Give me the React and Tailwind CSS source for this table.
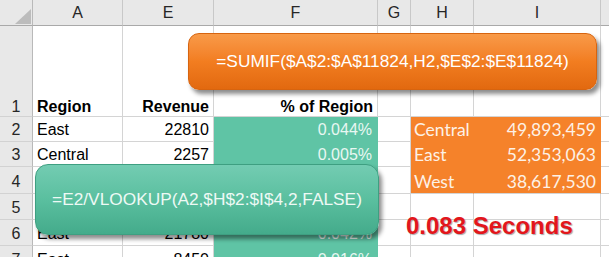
import React from "react";

const ARIAL = { fontFamily: '"Liberation Sans", Arial, sans-serif' };

function HeadCell({ children, last }) {
  return (
    <div
      className={
        last
          ? "bg-[#e8e8e8] border-b border-[#a9a9a9] flex items-center justify-center text-[16px] text-[#262626]"
          : "bg-[#e8e8e8] border-r border-b border-r-[#c8c8c8] border-b-[#a9a9a9] flex items-center justify-center text-[16px] text-[#262626]"
      }
    >
      {children}
    </div>
  );
}

function RowHead({ children }) {
  return (
    <div className="bg-[#e8e8e8] border-r border-b border-r-[#b9b9b9] border-b-[#d2d2d2] flex items-end justify-center pb-[2px] text-[16px] leading-[18px] text-[#262626]">
      {children}
    </div>
  );
}

function RowHeadTall({ children }) {
  return (
    <div className="bg-[#e8e8e8] border-r border-b border-r-[#b9b9b9] border-b-[#d2d2d2] flex items-end justify-center pb-0 text-[16px] leading-[18px] text-[#262626]">
      {children}
    </div>
  );
}

function Cell({ children, kind = "plain", align = "left", bold = false }) {
  let cls;
  if (kind === "teal") {
    cls =
      "bg-[#5fc4a5] border-r border-b border-[#5fc4a5] flex items-end pb-[2px] text-[16px] leading-[18px] text-[#e9f7f2] justify-end pr-[5px]";
  } else if (kind === "orange") {
    cls =
      align === "right"
        ? "bg-[#f5822a] border-r border-b border-[#f5822a] flex items-end pb-[1px] text-[17.5px] leading-[20px] text-[#fdf1e6] justify-end pr-[4px]"
        : "bg-[#f5822a] border-r border-b border-[#f5822a] flex items-end pb-[1px] text-[17.5px] leading-[20px] text-[#fdf1e6] justify-start pl-[3px]";
  } else if (kind === "orangeLast") {
    cls =
      align === "right"
        ? "bg-[#f5822a] border-r border-b border-r-[#f5822a] border-b-[#d4d4d4] flex items-end pb-[1px] text-[17.5px] leading-[20px] text-[#fdf1e6] justify-end pr-[4px]"
        : "bg-[#f5822a] border-r border-b border-r-[#f5822a] border-b-[#d4d4d4] flex items-end pb-[1px] text-[17.5px] leading-[20px] text-[#fdf1e6] justify-start pl-[3px]";
  } else if (kind === "tall") {
    cls =
      align === "right"
        ? "bg-white border-r border-b border-[#d4d4d4] flex items-end justify-end pr-[4px] pb-0 text-[16px] leading-[18px] text-black font-bold"
        : "bg-white border-r border-b border-[#d4d4d4] flex items-end justify-start pl-[4px] pb-0 text-[16px] leading-[18px] text-black font-bold";
  } else if (kind === "tallF") {
    cls =
      "bg-white border-r border-b border-[#d4d4d4] flex items-end justify-end pr-[4px] pb-0 text-[16px] leading-[18px] text-black font-bold";
  } else if (kind === "edge") {
    cls = "bg-white border-b border-[#d4d4d4]";
  } else {
    cls =
      align === "right"
        ? "bg-white border-r border-b border-[#d4d4d4] flex items-end justify-end pr-[4px] pb-[2px] text-[16px] leading-[18px] text-black"
        : "bg-white border-r border-b border-[#d4d4d4] flex items-end justify-start pl-[4px] pb-[2px] text-[16px] leading-[18px] text-black";
  }
  const style = kind.startsWith("orange")
    ? { fontFamily: 'Lato, "Open Sans", sans-serif' }
    : undefined;
  return (
    <div className={cls} style={style}>
      {children}
    </div>
  );
}

const dataRows = [
  { n: 2, a: "East", e: "22810", f: "0.044%", h: "Central", i: "49,893,459", hk: "orange" },
  { n: 3, a: "Central", e: "2257", f: "0.005%", h: "East", i: "52,353,063", hk: "orange" },
  { n: 4, a: "West", e: "5871", f: "0.015%", h: "West", i: "38,617,530", hk: "orangeLast" },
  { n: 5, a: "Central", e: "4512", f: "0.009%", h: "", i: "", hk: "plain" },
  { n: 6, a: "East", e: "21780", f: "0.042%", h: "", i: "", hk: "plain" },
  { n: 7, a: "East", e: "8450", f: "0.016%", h: "", i: "", hk: "plain" },
];

export default function App() {
  return (
    <div className="relative w-[609px] h-[257px] overflow-hidden bg-white" style={ARIAL}>
      <div className="grid grid-cols-[33px_90px_91px_164px_33px_63px_127px_8px] grid-rows-[26px_91px_25px_25px_27px_26px_26px_26px]">
        <div className="bg-[#e8e8e8] border-r border-b border-r-[#b9b9b9] border-b-[#a9a9a9] relative">
          <svg className="absolute left-[15px] top-[9px]" width="16" height="15" viewBox="0 0 16 15">
            <polygon points="16,0 16,15 0,15" fill="#bcbcbc" />
          </svg>
        </div>
        <HeadCell>A</HeadCell>
        <HeadCell>E</HeadCell>
        <HeadCell>F</HeadCell>
        <HeadCell>G</HeadCell>
        <HeadCell>H</HeadCell>
        <HeadCell>I</HeadCell>
        <HeadCell last></HeadCell>

        <RowHeadTall>1</RowHeadTall>
        <Cell kind="tall">Region</Cell>
        <Cell kind="tall" align="right">Revenue</Cell>
        <Cell kind="tallF">% of Region</Cell>
        <Cell kind="tall"></Cell>
        <Cell kind="tall"></Cell>
        <Cell kind="tall"></Cell>
        <Cell kind="edge"></Cell>

        {dataRows.map((r) => (
          <React.Fragment key={r.n}>
            <RowHead>{r.n}</RowHead>
            <Cell>{r.a}</Cell>
            <Cell align="right">{r.e}</Cell>
            <Cell kind="teal">{r.f}</Cell>
            <Cell></Cell>
            <Cell kind={r.hk}>{r.h}</Cell>
            <Cell kind={r.hk} align="right">{r.i}</Cell>
            <Cell kind="edge"></Cell>
          </React.Fragment>
        ))}
      </div>

      {/* Orange SUMIF callout */}
      <div className="absolute left-[188px] top-[33px] w-[409px] h-[57px] rounded-[11px] border border-[#d7640f] bg-gradient-to-b from-[#f89a48] via-[#f27d20] to-[#e2690f] shadow-[3px_4px_4px_rgba(0,0,0,0.45)] flex items-center justify-center text-white text-[17.3px]">
        =SUMIF($A$2:$A$11824,H2,$E$2:$E$11824)
      </div>

      {/* Teal VLOOKUP callout */}
      <div className="absolute left-[35px] top-[164px] w-[344px] h-[71px] rounded-[13px] border border-[#3e9f81] bg-gradient-to-b from-[#73ccb2] via-[#5abf9f] to-[#44ab8b] shadow-[3px_4px_4px_rgba(0,0,0,0.45)] flex items-center justify-center text-[#eef9f5] text-[17.3px]">
        =E2/VLOOKUP(A2,$H$2:$I$4,2,FALSE)
      </div>

      {/* Timing label */}
      <div className="absolute left-[406px] top-[214px] text-[24px] leading-[24px] font-bold text-[#e3161c] [text-shadow:1px_1px_1px_rgba(0,0,0,0.35)] whitespace-nowrap">
        0.083 Seconds
      </div>
    </div>
  );
}
